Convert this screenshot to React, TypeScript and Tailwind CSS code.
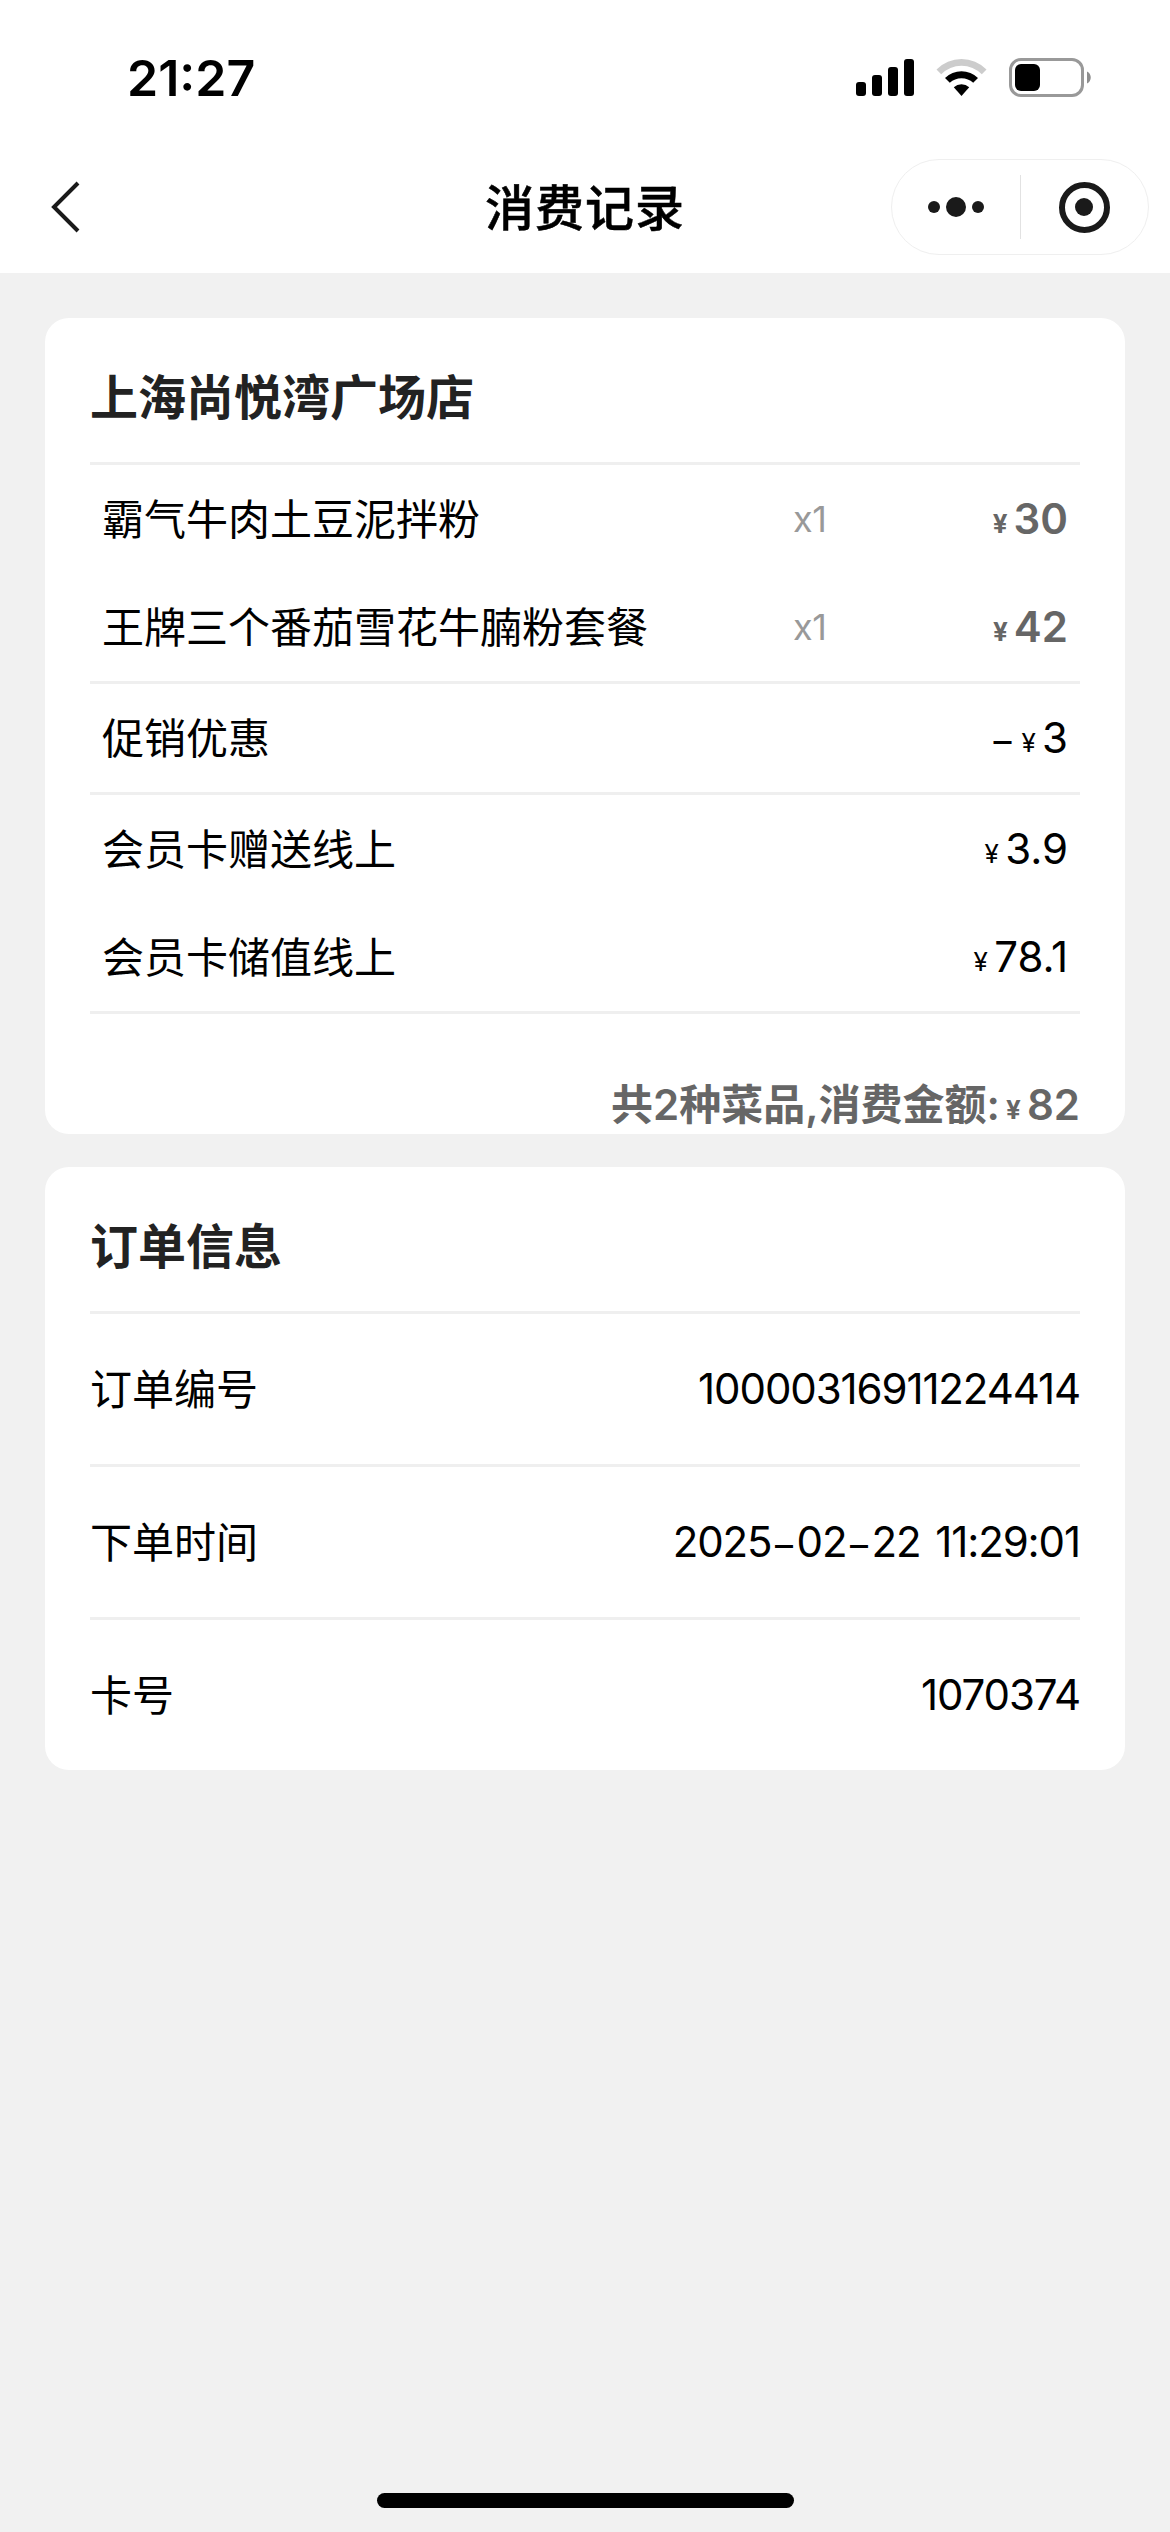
import type { ReactNode } from 'react';

function Yen({ className = '' }: { className?: string }) {
  return (
    <span className={`relative -top-px inline-block w-[27px] text-center text-[26px] leading-none tracking-normal ${className}`}>¥</span>
  );
}

function Dash() {
  return <span className="relative top-px inline-block w-[25px] text-center text-[36px] leading-none tracking-normal">–</span>;
}

function StatusBar() {
  return (
    <div className="flex h-[114px] items-start justify-between pl-[127px] pr-[78px]">
      <span className="mt-[48px] text-[50px] leading-[60px] font-semibold text-black">21:27</span>
      <div className="mt-[58px] flex items-start">
        <svg width="60" height="40" viewBox="0 0 60 40" className="mr-[20px]">
          <rect x="0" y="24" width="10" height="14" rx="3" />
          <rect x="16" y="17" width="10" height="21" rx="3" />
          <rect x="32" y="9" width="10" height="29" rx="3" />
          <rect x="48" y="1" width="10" height="37" rx="3" />
        </svg>
        <svg width="51" height="40" viewBox="0 0 51 40" className="mr-[22px]">
          <path d="M0.5 11.5a35 35 0 0 1 50 0l-4.7 4.8a28.5 28.5 0 0 0-40.6 0z" fill="#cccccc" />
          <path d="M9 20a23.5 23.5 0 0 1 33 0l-4.8 4.8a17 17 0 0 0-23.4 0z" />
          <path d="M17.8 29.2a11.5 11.5 0 0 1 15.4 0L25.5 38z" />
        </svg>
        <svg width="83" height="40" viewBox="0 0 83 40">
          <rect x="1.5" y="1.5" width="72" height="36" rx="10.5" fill="none" stroke="#999999" strokeWidth="3" />
          <rect x="6" y="6" width="25" height="27" rx="6" />
          <path d="M78 13.5c5 2 5 10 0 12z" fill="#8e8e8e" />
        </svg>
      </div>
    </div>
  );
}

function NavBar() {
  return (
    <div className="grid h-[159px] grid-cols-[1fr_auto_1fr] items-start">
      <svg width="34" height="54" viewBox="0 0 34 54" className="mt-[66px] ml-[50px]">
        <path d="M28 3L4 27l24 24" fill="none" stroke="#1a1a1a" strokeWidth="4" />
      </svg>
      <h1 className="mt-[59px] text-[49px] leading-[72px] font-medium tracking-[1px] text-black [-webkit-text-stroke:0.5px_black]">消费记录</h1>
      <div className="mt-[45px] mr-[21px] flex h-[96px] w-[258px] items-center justify-self-end rounded-full border border-[#efefef]">
        <div className="flex flex-1 items-center justify-center gap-[6px]">
          <i className="size-[12px] rounded-full bg-[#1a1a1a]" />
          <i className="size-[20px] rounded-full bg-[#1a1a1a]" />
          <i className="size-[12px] rounded-full bg-[#1a1a1a]" />
        </div>
        <div className="h-[64px] w-px bg-[#e2e2e2]" />
        <div className="flex flex-1 items-center justify-center">
          <div className="flex size-[51px] items-center justify-center rounded-full border-[6px] border-[#1a1a1a]">
            <i className="size-[18px] rounded-full bg-[#1a1a1a]" />
          </div>
        </div>
      </div>
    </div>
  );
}

function CardTitle({ children }: { children: ReactNode }) {
  return (
    <h2 className="flex h-[147px] items-center border-b-[3px] border-[#efefef] pt-[15px] text-[48px] font-semibold text-[#222222]">
      {children}
    </h2>
  );
}

function ItemRow({ name, qty, children }: { name: string; qty?: string; children: ReactNode }) {
  return (
    <div className="flex h-[108px] items-center px-[12px] text-[42px]">
      <span className="flex-1 pt-[2px]">{name}</span>
      {qty && <span className="w-[88px] text-[36px] tracking-[-0.5px] text-[#999999]">{qty}</span>}
      <span className={qty ? 'w-[187px] text-right font-semibold text-[#666666]' : 'text-right'}>{children}</span>
    </div>
  );
}

function InfoRow({ label, children, last }: { label: string; children: ReactNode; last?: boolean }) {
  return (
    <div className={`flex items-center justify-between text-[42px] ${last ? 'h-[150px]' : 'h-[153px] border-b-[3px] border-[#efefef]'}`}>
      <span className="pt-[2px]">{label}</span>
      <span className="tracking-[-1.1px]">{children}</span>
    </div>
  );
}

export default function App() {
  return (
    <div className="flex h-[2532px] w-[1170px] flex-col bg-[#f1f1f1] font-['Inter','Noto_Sans_CJK_SC',sans-serif] leading-none text-black">
      <header className="h-[273px] bg-white">
        <StatusBar />
        <NavBar />
      </header>

      <main className="flex flex-1 flex-col gap-[33px] px-[45px] pt-[45px]">
        <section className="h-[816px] rounded-[24px] bg-white px-[45px]">
          <CardTitle>上海尚悦湾广场店</CardTitle>
          <div className="border-b-[3px] border-[#efefef]">
            <ItemRow name="霸气牛肉土豆泥拌粉" qty="x1"><Yen className="font-bold" />30</ItemRow>
            <ItemRow name="王牌三个番茄雪花牛腩粉套餐" qty="x1"><Yen className="font-bold" />42</ItemRow>
          </div>
          <div className="border-b-[3px] border-[#efefef]">
            <ItemRow name="促销优惠"><Dash /><Yen />3</ItemRow>
          </div>
          <div className="border-b-[3px] border-[#efefef]">
            <ItemRow name="会员卡赠送线上"><Yen />3.9</ItemRow>
            <ItemRow name="会员卡储值线上"><Yen />78.1</ItemRow>
          </div>
          <p className="mt-[61px] text-right text-[42px] leading-[60px] font-semibold text-[#666666]">
            共2种菜品,消费金额:<Yen className="font-bold" />82
          </p>
        </section>

        <section className="h-[603px] rounded-[24px] bg-white px-[45px]">
          <CardTitle>订单信息</CardTitle>
          <InfoRow label="订单编号">10000316911224414</InfoRow>
          <InfoRow label="下单时间">2025<Dash />02<Dash />22<span className="ml-[4px]"> 11:29:01</span></InfoRow>
          <InfoRow label="卡号" last>1070374</InfoRow>
        </section>
      </main>

      <footer className="flex h-[39px] justify-center">
        <div className="h-[15px] w-[417px] rounded-full bg-black" />
      </footer>
    </div>
  );
}
